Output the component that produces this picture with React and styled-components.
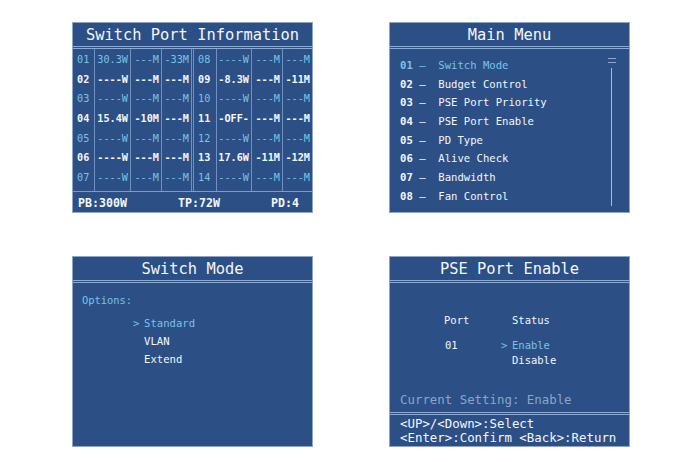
import React from "react"
import styled, { createGlobalStyle } from "styled-components"

const GlobalStyle = createGlobalStyle`
  html, body {
    margin: 0;
    padding: 0;
    background: #ffffff;
  }
  body {
    font-family: "DejaVu Sans Mono", "Liberation Mono", monospace;
  }
`

const CYAN = "#78c4e6"
const WHITE = "#f4f7fc"
const LINE = "#7090c0"

const Page = styled.div`
  display: grid;
  grid-template-columns: 241px 241px;
  grid-template-rows: 191px 191px;
  column-gap: 76px;
  row-gap: 43px;
  padding: 22px 0 0 72px;
`

const Panel = styled.div`
  box-sizing: border-box;
  width: 241px;
  height: 191px;
  border: 1px solid #8ea5c8;
  background: #2c4f86;
  display: flex;
  flex-direction: column;
  color: ${WHITE};
  overflow: hidden;
`

const TitleBar = styled.div`
  height: 23px;
  line-height: 25px;
  text-align: center;
  font-size: 15.4px;
  color: ${WHITE};
  border-bottom: 3px double #8cabd6;
  flex: none;
`

/* ---------- Switch Port Information ---------- */

const Table = styled.div`
  display: flex;
  flex: 1;
`

const Half = styled.div`
  display: flex;
  border-right: ${(p) => (p.$split ? `3px double ${LINE}` : "none")};
`

const Col = styled.div`
  box-sizing: border-box;
  width: ${(p) => p.$w}px;
  display: flex;
  flex-direction: column;
  padding-top: 1px;
  border-left: ${(p) => (p.$first ? "none" : `1px solid ${LINE}`)};
  text-align: ${(p) => (p.$left ? "left" : "right")};
  padding-left: ${(p) => (p.$left ? 4 : 0)}px;
  padding-right: ${(p) => (p.$left ? 0 : 2)}px;
`

const Cell = styled.div`
  height: 19.7px;
  line-height: 20.5px;
  font-size: 10.2px;
  white-space: pre;
  color: ${(p) => (p.$hi ? CYAN : WHITE)};
  font-weight: ${(p) => (p.$hi ? "normal" : "bold")};
`

const InfoFooter = styled.div`
  height: 19px;
  flex: none;
  border-top: 1px solid #7f9ac4;
  display: flex;
  justify-content: space-between;
  align-items: center;
  padding: 1px 13px 0 5px;
  font-size: 11.6px;
  font-weight: bold;
`

const leftRows = [
  ["01", "30.3W", "---M", "-33M"],
  ["02", "----W", "---M", "---M"],
  ["03", "----W", "---M", "---M"],
  ["04", "15.4W", "-10M", "---M"],
  ["05", "----W", "---M", "---M"],
  ["06", "----W", "---M", "---M"],
  ["07", "----W", "---M", "---M"],
]

const rightRows = [
  ["08", "----W", "---M", "---M"],
  ["09", "-8.3W", "---M", "-11M"],
  ["10", "----W", "---M", "---M"],
  ["11", "-OFF-", "---M", "---M"],
  ["12", "----W", "---M", "---M"],
  ["13", "17.6W", "-11M", "-12M"],
  ["14", "----W", "---M", "---M"],
]

const PortHalf = ({ rows, widths, split }) => (
  <Half $split={split}>
    {widths.map((w, ci) => (
      <Col key={ci} $w={w} $first={ci === 0} $left={ci === 0}>
        {rows.map((r, ri) => (
          <Cell key={ri} $hi={ri % 2 === 0}>
            {r[ci]}
          </Cell>
        ))}
      </Col>
    ))}
  </Half>
)

const PortInfo = () => (
  <Panel>
    <TitleBar>Switch Port Information</TitleBar>
    <Table>
      <PortHalf rows={leftRows} widths={[21, 36, 31, 30]} split />
      <PortHalf rows={rightRows} widths={[22, 35, 31, 30]} />
    </Table>
    <InfoFooter>
      <span>PB:300W</span>
      <span>TP:72W</span>
      <span>PD:4</span>
    </InfoFooter>
  </Panel>
)

/* ---------- Main Menu ---------- */

const MenuBody = styled.div`
  flex: 1;
  display: flex;
`

const MenuList = styled.div`
  flex: 1;
  padding: 7px 0 0 10px;
`

const MenuItem = styled.div`
  height: 18.7px;
  line-height: 18.7px;
  font-size: 10.6px;
  white-space: pre;
  color: ${(p) => (p.$active ? CYAN : WHITE)};
`

const MenuNum = styled.span`
  font-weight: bold;
`

const ScrollTrack = styled.div`
  width: 9px;
  margin: 6px 13px 6px 0;
  display: flex;
  flex-direction: column;
  align-items: center;
`

const ScrollThumb = styled.div`
  width: 8px;
  height: 3px;
  border-top: 1px solid #8fa8cc;
  border-bottom: 1px solid #8fa8cc;
  margin-top: 3px;
`

const ScrollLine = styled.div`
  width: 1px;
  flex: 1;
  background: #a9bcd8;
  margin-top: 5px;
`

const menuItems = [
  "Switch Mode",
  "Budget Control",
  "PSE Port Priority",
  "PSE Port Enable",
  "PD Type",
  "Alive Check",
  "Bandwidth",
  "Fan Control",
]

const MainMenu = () => (
  <Panel>
    <TitleBar>Main Menu</TitleBar>
    <MenuBody>
      <MenuList>
        {menuItems.map((m, i) => (
          <MenuItem key={m} $active={i === 0}>
            <MenuNum>{`0${i + 1}`}</MenuNum>
            {` —  ${m}`}
          </MenuItem>
        ))}
      </MenuList>
      <ScrollTrack>
        <ScrollThumb />
        <ScrollLine />
      </ScrollTrack>
    </MenuBody>
  </Panel>
)

/* ---------- Switch Mode ---------- */

const ModeBody = styled.div`
  padding: 8px 0 0 9px;
`

const Label = styled.div`
  font-size: 10.4px;
  line-height: 18px;
  color: ${CYAN};
`

const Options = styled.div`
  display: grid;
  grid-template-columns: 11px auto;
  margin: 5px 0 0 51px;
`

const Pointer = styled.span`
  font-size: 10.6px;
  line-height: 18px;
  color: ${CYAN};
`

const Option = styled.span`
  font-size: 10.6px;
  line-height: 18px;
  color: ${(p) => (p.$active ? CYAN : WHITE)};
`

const SwitchMode = () => (
  <Panel>
    <TitleBar>Switch Mode</TitleBar>
    <ModeBody>
      <Label>Options:</Label>
      <Options>
        {["Standard", "VLAN", "Extend"].map((o, i) => (
          <React.Fragment key={o}>
            <Pointer>{i === 0 ? ">" : ""}</Pointer>
            <Option $active={i === 0}>{o}</Option>
          </React.Fragment>
        ))}
      </Options>
    </ModeBody>
  </Panel>
)

/* ---------- PSE Port Enable ---------- */

const EnableBody = styled.div`
  flex: 1;
  display: flex;
  flex-direction: column;
`

const StatusGrid = styled.div`
  display: grid;
  grid-template-columns: 57px 11px auto;
  grid-template-rows: 15px 10px 15px 15px;
  margin: 30px 0 0 54px;
  font-size: 10.5px;
  line-height: 15px;
`

const GridText = styled.span`
  color: ${(p) => (p.$hi ? CYAN : WHITE)};
  padding-left: ${(p) => p.$pad || 0}px;
`

const Spacer = styled.div`
  flex: 1;
`

const Current = styled.div`
  font-size: 12.4px;
  line-height: 15px;
  color: #8ba6c8;
  padding-left: 10px;
  margin-bottom: 5px;
`

const HelpFooter = styled.div`
  border-top: 3px double #8cabd6;
  padding: 2px 0 1px 10px;
  font-size: 12.4px;
  line-height: 14px;
  color: ${WHITE};
  white-space: pre;
`

const PseEnable = () => (
  <Panel>
    <TitleBar>PSE Port Enable</TitleBar>
    <EnableBody>
      <StatusGrid>
        <GridText>Port</GridText>
        <GridText />
        <GridText>Status</GridText>
        <GridText />
        <GridText />
        <GridText />
        <GridText $pad={1}>01</GridText>
        <GridText $hi>&gt;</GridText>
        <GridText $hi>Enable</GridText>
        <GridText />
        <GridText />
        <GridText>Disable</GridText>
      </StatusGrid>
      <Spacer />
      <Current>Current Setting: Enable</Current>
      <HelpFooter>
        <div>{"<UP>/<Down>:Select"}</div>
        <div>{"<Enter>:Confirm <Back>:Return"}</div>
      </HelpFooter>
    </EnableBody>
  </Panel>
)

const App = () => (
  <>
    <GlobalStyle />
    <Page>
      <PortInfo />
      <MainMenu />
      <SwitchMode />
      <PseEnable />
    </Page>
  </>
)

export default App
